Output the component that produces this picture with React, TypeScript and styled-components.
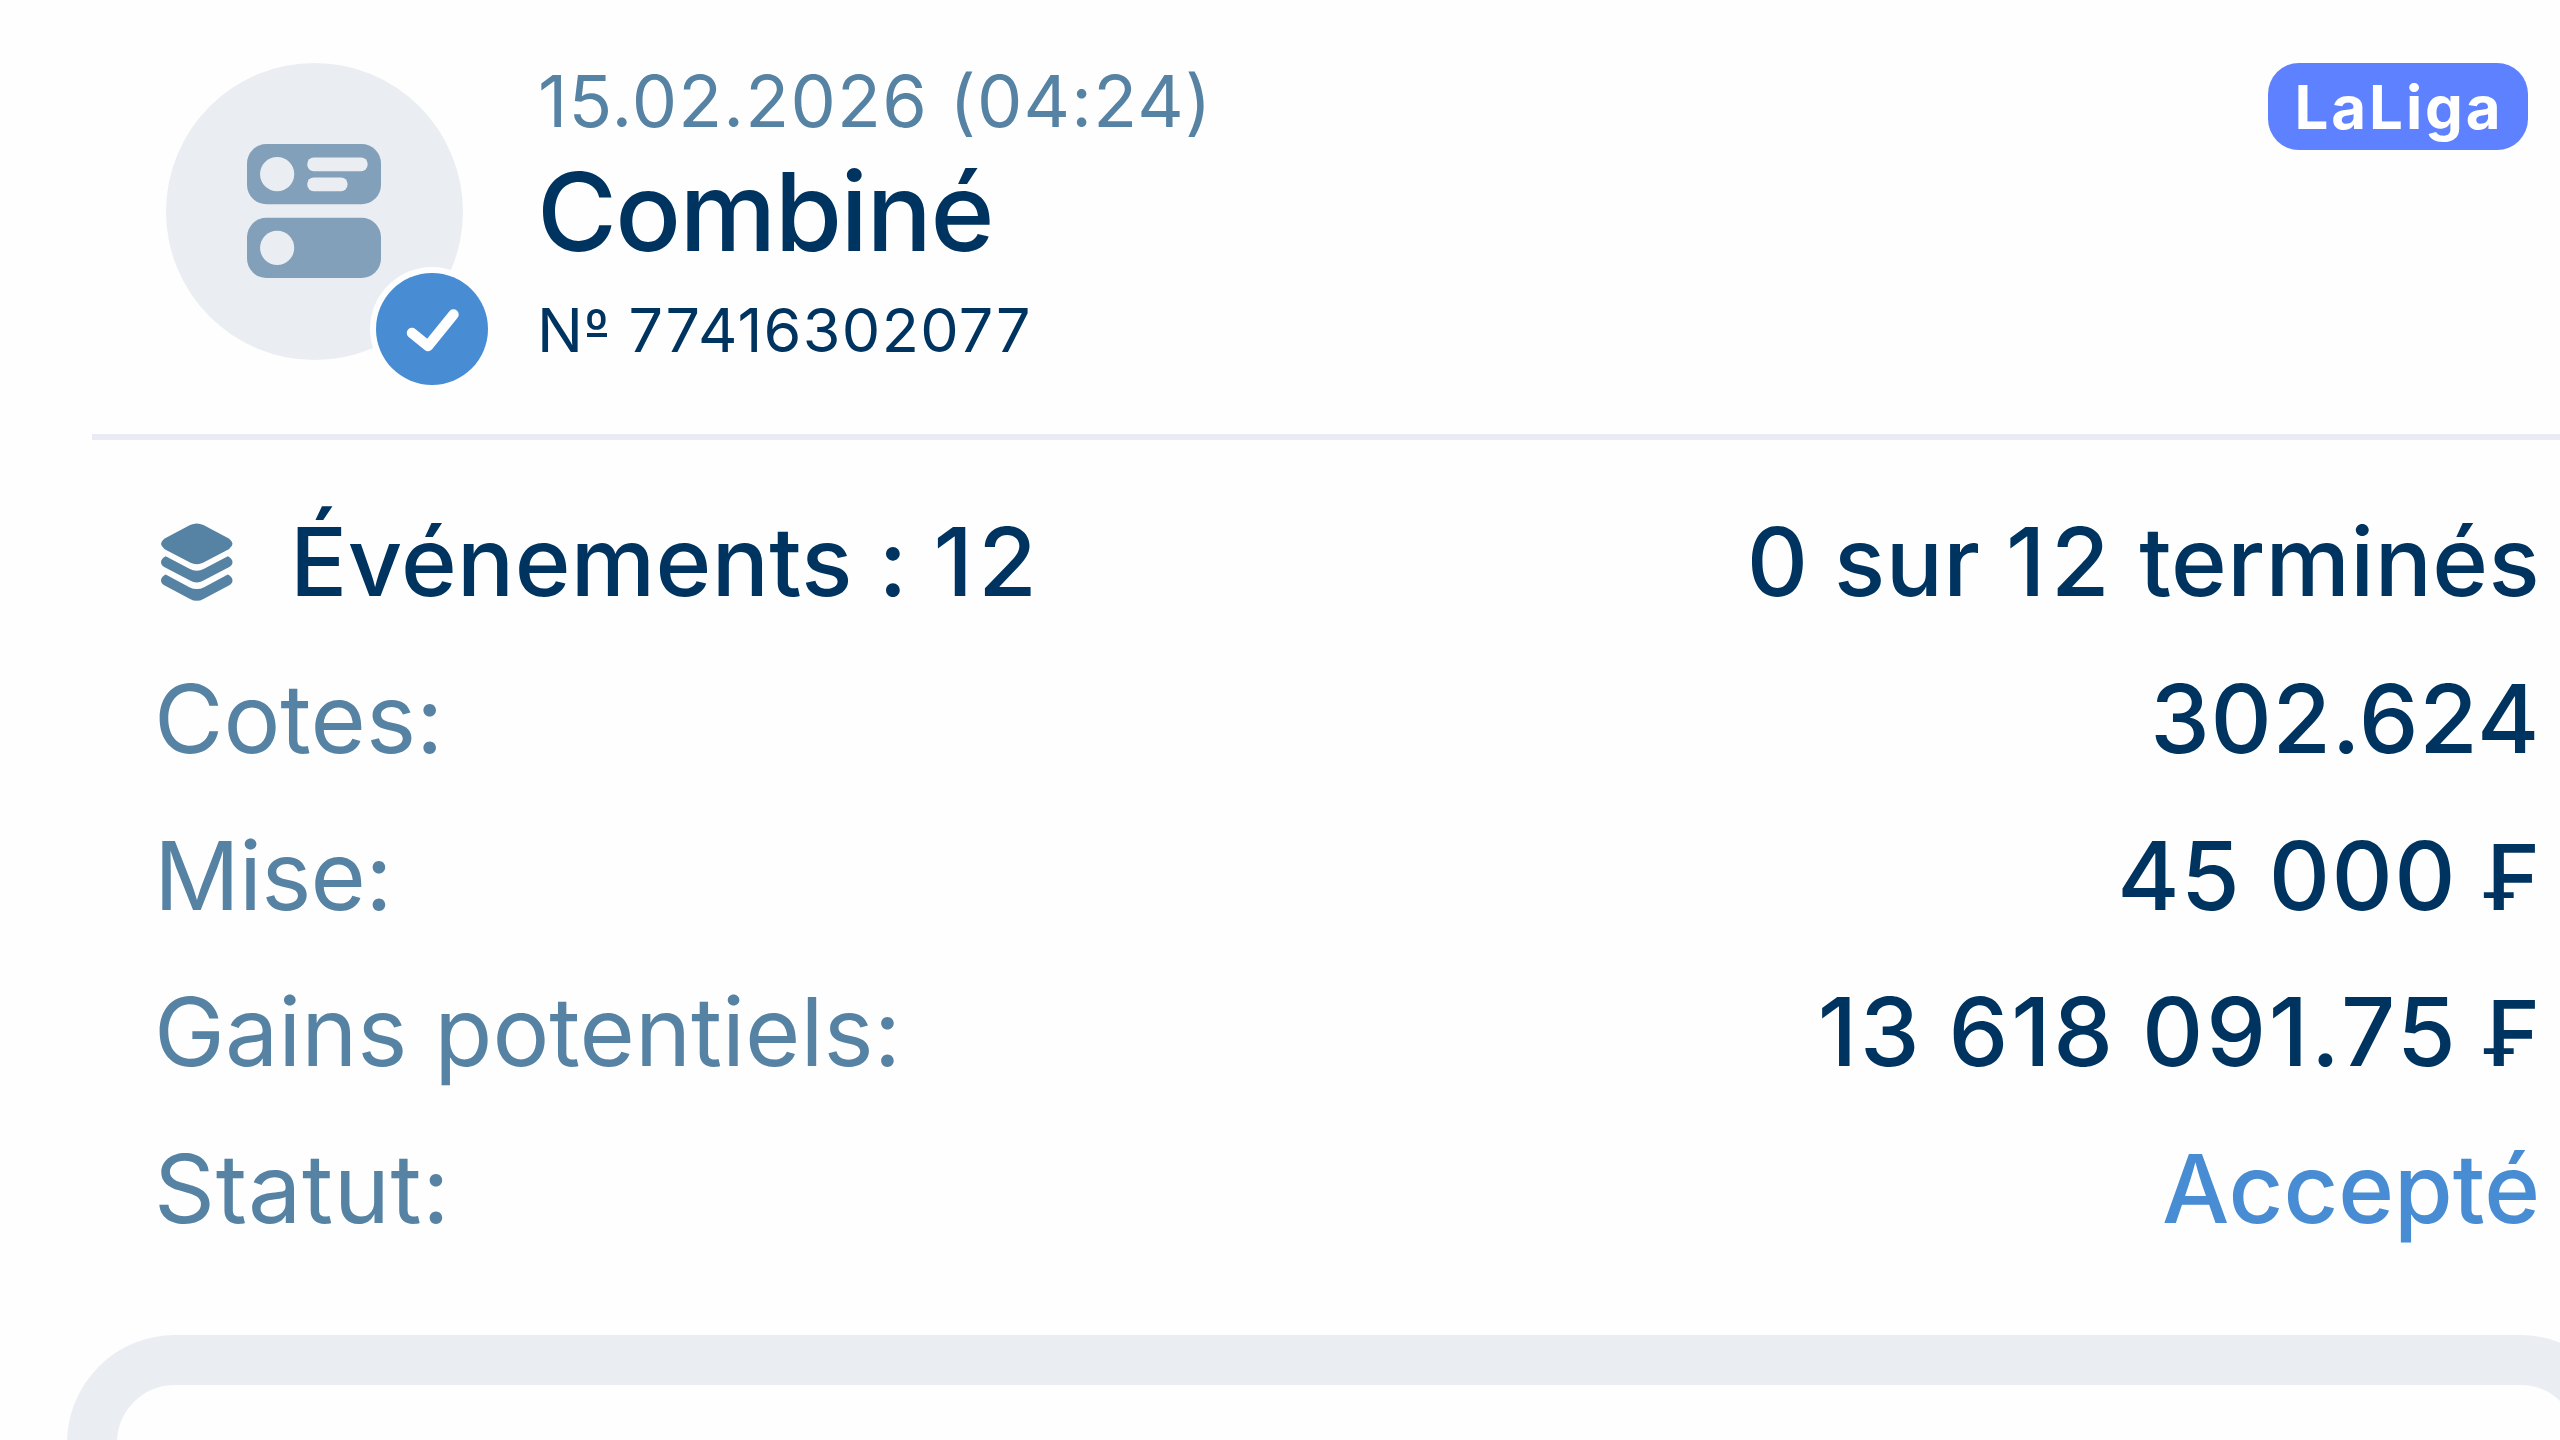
import React from "react";
import type { ReactNode } from "react";
import styled, { createGlobalStyle } from "styled-components";

const color = {
  ink: "#003460",
  muted: "#5682a3",
  accent: "#488dd3",
  tag: "#5e81ff",
  surface: "#eaeef3",
  line: "#e8ebf3",
  glyph: "#82a0b9",
};

const GlobalStyle = createGlobalStyle`
  * {
    box-sizing: border-box;
  }
  html,
  body {
    margin: 0;
    background: #fefefe;
    overflow: hidden;
  }
`;

const Screen = styled.main`
  display: flex;
  flex-direction: column;
  width: 2560px;
  height: 1440px;
  overflow: hidden;
  background: #fefefe;
  color: ${color.ink};
  font-family: Inter, "Liberation Sans", sans-serif;
  white-space: nowrap;
`;

const Header = styled.header`
  display: flex;
  align-items: flex-start;
  flex: none;
  height: 434px;
  padding: 56px 32px 0 166px;
`;

const Avatar = styled.div`
  position: relative;
  display: grid;
  place-items: center;
  flex: none;
  width: 297px;
  height: 297px;
  margin: 6.5px 74px 0 0;
  padding-right: 1.5px;
  border-radius: 50%;
  background: ${color.surface};
`;

const CheckBadge = styled.span`
  position: absolute;
  left: 204px;
  top: 204.5px;
  width: 124px;
  height: 124px;
  padding: 6px;
  border-radius: 50%;
  background: #fefefe;
`;

const HeaderText = styled.div`
  display: flex;
  flex-direction: column;
  flex: 1;
`;

const DateLine = styled.time`
  padding-left: 1px;
  color: ${color.muted};
  font-size: 72px;
  line-height: 90px;
  letter-spacing: 1.2px;
`;

const Title = styled.h1`
  margin: 9.5px 0 29.5px;
  font-size: 109px;
  font-weight: 500;
  line-height: 110px;
  letter-spacing: -1.6px;
`;

const Reference = styled.span`
  font-size: 61px;
  line-height: 70px;
  letter-spacing: 1.35px;
`;

const Ordinal = styled.span`
  position: relative;
  font-size: 54px;
  line-height: 0;
  vertical-align: 4px;

  &::after {
    content: "";
    position: absolute;
    left: 3px;
    right: 3px;
    bottom: 24px;
    height: 4px;
    background: currentColor;
  }
`;

const LeagueTag = styled.span`
  flex: none;
  width: 260px;
  height: 87px;
  margin-top: 7px;
  padding: 1px 0 0 26.5px;
  border-radius: 31px;
  background: ${color.tag};
  color: #fff;
  font-size: 60px;
  font-weight: 700;
  line-height: 86px;
  letter-spacing: 2.9px;
`;

const Divider = styled.hr`
  flex: none;
  align-self: stretch;
  height: 6px;
  margin: 0 0 0 92px;
  border: 0;
  background: ${color.line};
`;

const Details = styled.dl`
  display: flex;
  flex-direction: column;
  flex: none;
  margin: 0;
  padding: 44px 20px 0 154px;
  font-size: 95px;
  line-height: 156.75px;
`;

const Row = styled.div`
  display: flex;
  align-items: center;
  justify-content: space-between;
  height: 156.75px;
`;

const Label = styled.dt<{ $strong?: boolean; $tracking?: number }>`
  display: flex;
  align-items: center;
  color: ${(p) => (p.$strong ? color.ink : color.muted)};
  font-weight: ${(p) => (p.$strong ? 500 : 400)};
  letter-spacing: ${(p) => p.$tracking ?? 0}px;
`;

const Value = styled.dd<{ $accent?: boolean; $tracking?: number; $wordGap?: number }>`
  margin: 0;
  color: ${(p) => (p.$accent ? color.accent : color.ink)};
  font-weight: 500;
  letter-spacing: ${(p) => p.$tracking ?? 0}px;
  word-spacing: ${(p) => p.$wordGap ?? 0}px;
`;

const Count = styled.span`
  margin-right: -1.4px;
  letter-spacing: 5.4px;
`;

const Currency = styled.span`
  font-size: 91px;
  line-height: 0;
  letter-spacing: 0;
`;

const LayersSvg = styled.svg`
  display: block;
  width: 71.5px;
  height: 78px;
  margin: 0 57.5px 0 7px;
`;

const EventCard = styled.section`
  flex: none;
  width: 2561px;
  height: 400px;
  margin: 67.5px 0 0 67px;
  border: 50px solid ${color.surface};
  border-radius: 108px;
`;

const CouponIcon = () => (
  <svg width="134" height="134" viewBox="0 0 20 20">
    <rect width="20" height="9" rx="2.9" fill={color.glyph} />
    <rect y="11" width="20" height="9" rx="2.9" fill={color.glyph} />
    <g fill={color.surface}>
      <circle cx="4.5" cy="4.5" r="2.55" />
      <circle cx="4.5" cy="15.5" r="2.55" />
      <rect x="9" y="2" width="9" height="2.05" rx="0.95" />
      <rect x="9" y="5" width="6" height="2.05" rx="0.95" />
    </g>
  </svg>
);

const CheckIcon = () => (
  <svg width="112" height="112" viewBox="0 0 112 112">
    <circle cx="56" cy="56" r="56" fill={color.accent} />
    <path
      d="M36 60 L52 73 L77.5 41.5"
      fill="none"
      stroke="#fff"
      strokeWidth="10.5"
      strokeLinecap="round"
      strokeLinejoin="round"
    />
  </svg>
);

const LayersIcon = () => (
  <LayersSvg viewBox="33 38 214 233" fill={color.muted}>
    <path d="M120 44Q140 34 160 44L236 84Q258 100 236 116L160 156Q140 166 120 156L44 116Q22 100 44 84Z" />
    <path d="M47 137L118 175Q140 186 162 175L233 137Q247 144 247 155Q247 164 236 170L160 210Q140 221 120 210L44 170Q33 164 33 155Q33 144 47 137Z" />
    <path d="M47 192L118 230Q140 241 162 230L233 192Q247 199 247 210Q247 219 236 225L160 265Q140 276 120 265L44 225Q33 219 33 210Q33 199 47 192Z" />
  </LayersSvg>
);

type Detail = {
  label: string;
  value: ReactNode;
  labelTracking?: number;
  valueTracking?: number;
  wordGap?: number;
  accent?: boolean;
};

const details: Detail[] = [
  { label: "Cotes:", value: "302.624", valueTracking: 0.7 },
  {
    label: "Mise:",
    value: (
      <>
        45 000 <Currency>₣</Currency>
      </>
    ),
    labelTracking: -0.8,
    valueTracking: 1.4,
    wordGap: 1,
  },
  {
    label: "Gains potentiels:",
    value: (
      <>
        13 618 091.75 <Currency>₣</Currency>
      </>
    ),
    valueTracking: 2.8,
    wordGap: -2,
  },
  { label: "Statut:", value: "Accepté", labelTracking: 0.7, accent: true },
];

export default function App() {
  return (
    <>
      <GlobalStyle />
      <Screen>
        <Header>
          <Avatar>
            <CouponIcon />
            <CheckBadge>
              <CheckIcon />
            </CheckBadge>
          </Avatar>
          <HeaderText>
            <DateLine>15.02.2026 (04:24)</DateLine>
            <Title>Combiné</Title>
            <Reference>
              N<Ordinal>º</Ordinal> 77416302077
            </Reference>
          </HeaderText>
          <LeagueTag>LaLiga</LeagueTag>
        </Header>
        <Divider />
        <Details>
          <Row>
            <Label $strong $tracking={0.4}>
              <LayersIcon />
              <span>
                Événements : <Count>12</Count>
              </span>
            </Label>
            <Value $tracking={0.4}>
              0 sur <Count>12</Count> terminés
            </Value>
          </Row>
          {details.map((d) => (
            <Row key={d.label}>
              <Label $tracking={d.labelTracking}>{d.label}</Label>
              <Value $accent={d.accent} $tracking={d.valueTracking} $wordGap={d.wordGap}>
                {d.value}
              </Value>
            </Row>
          ))}
        </Details>
        <EventCard />
      </Screen>
    </>
  );
}
